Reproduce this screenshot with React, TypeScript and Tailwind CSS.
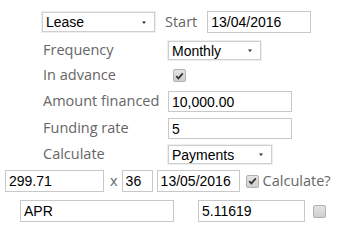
import { ReactNode } from "react";

const labelCls = "font-['Open_Sans',sans-serif] text-[14.5px] text-[#666666] leading-none";
const fieldCls =
  "border border-[#c8c8c8] bg-white font-['Liberation_Sans',Arial,sans-serif] text-[14px] text-black px-[3px] flex items-center leading-none";

const Select = ({ value, className }: { value: string; className: string }) => (
  <div className={`${fieldCls} justify-between border-[#cfcfcf] shadow-[0_0_0_1px_#eeeeee] ${className}`}>
    <span>{value}</span>
    <svg width="4" height="3" viewBox="0 0 4 3" className="mr-[5px]">
      <path d="M0 0.5 L4 0.5 L2 3 Z" fill="#333" />
    </svg>
  </div>
);

const Field = ({ value, className }: { value: string; className: string }) => (
  <div className={`${fieldCls} ${className}`}>{value}</div>
);

const Check = ({ checked }: { checked?: boolean }) => (
  <span className="w-[13px] h-[13px] rounded-[2px] border border-[#b0b0b0] bg-gradient-to-b from-[#e4e4e4] to-[#cfcfcf] flex items-center justify-center">
    {checked && (
      <svg width="9" height="8" viewBox="0 0 9 8">
        <path d="M1.2 4.2 L3.4 6.4 L7.8 1.4" stroke="#333" strokeWidth="1.7" fill="none" />
      </svg>
    )}
  </span>
);

const Row = ({ label, children, h }: { label: string; children: ReactNode; h: string }) => (
  <div className={`flex items-center ${h}`}>
    <span className={`${labelCls} w-[125px]`}>{label}</span>
    {children}
  </div>
);

export default function App() {
  return (
    <div className="w-[350px] h-[240px] bg-white overflow-hidden">
      <div className="flex items-center pl-[42px] pt-[11px]">
        <Select value="Lease" className="w-[113px] h-[20px]" />
        <span className={`${labelCls} ml-[10px]`}>Start</span>
        <Field value="13/04/2016" className="ml-[10px] w-[104px] h-[22px]" />
      </div>
      <div className="pl-[43px] mt-[5px] flex flex-col">
        <Row label="Frequency" h="h-[25px]">
          <Select value="Monthly" className="w-[93px] h-[19px]" />
        </Row>
        <Row label="In advance" h="h-[25px]">
          <span className="ml-[5px]">
            <Check checked />
          </span>
        </Row>
        <Row label="Amount financed" h="h-[27px]">
          <Field value="10,000.00" className="w-[124px] h-[21px]" />
        </Row>
        <Row label="Funding rate" h="h-[27px]">
          <Field value="5" className="w-[124px] h-[21px]" />
        </Row>
        <Row label="Calculate" h="h-[25px]">
          <Select value="Payments" className="w-[104px] h-[19px]" />
        </Row>
      </div>
      <div className="flex items-center pl-[5px] mt-[3px]">
        <Field value="299.71" className="w-[99px] h-[22px]" />
        <span className={`${labelCls} ml-[6px] mr-[4px]`}>x</span>
        <Field value="36" className="w-[31px] h-[22px]" />
        <Field value="13/05/2016" className="ml-[4px] w-[83px] h-[22px]" />
        <span className="ml-[6px]">
          <Check checked />
        </span>
        <span className={`${labelCls} ml-[4px]`}>Calculate?</span>
      </div>
      <div className="flex items-center pl-[20px] mt-[8px]">
        <Field value="APR" className="w-[154px] h-[22px]" />
        <Field value="5.11619" className="ml-[24px] w-[107px] h-[22px]" />
        <span className="ml-[8px]">
          <Check />
        </span>
      </div>
    </div>
  );
}
